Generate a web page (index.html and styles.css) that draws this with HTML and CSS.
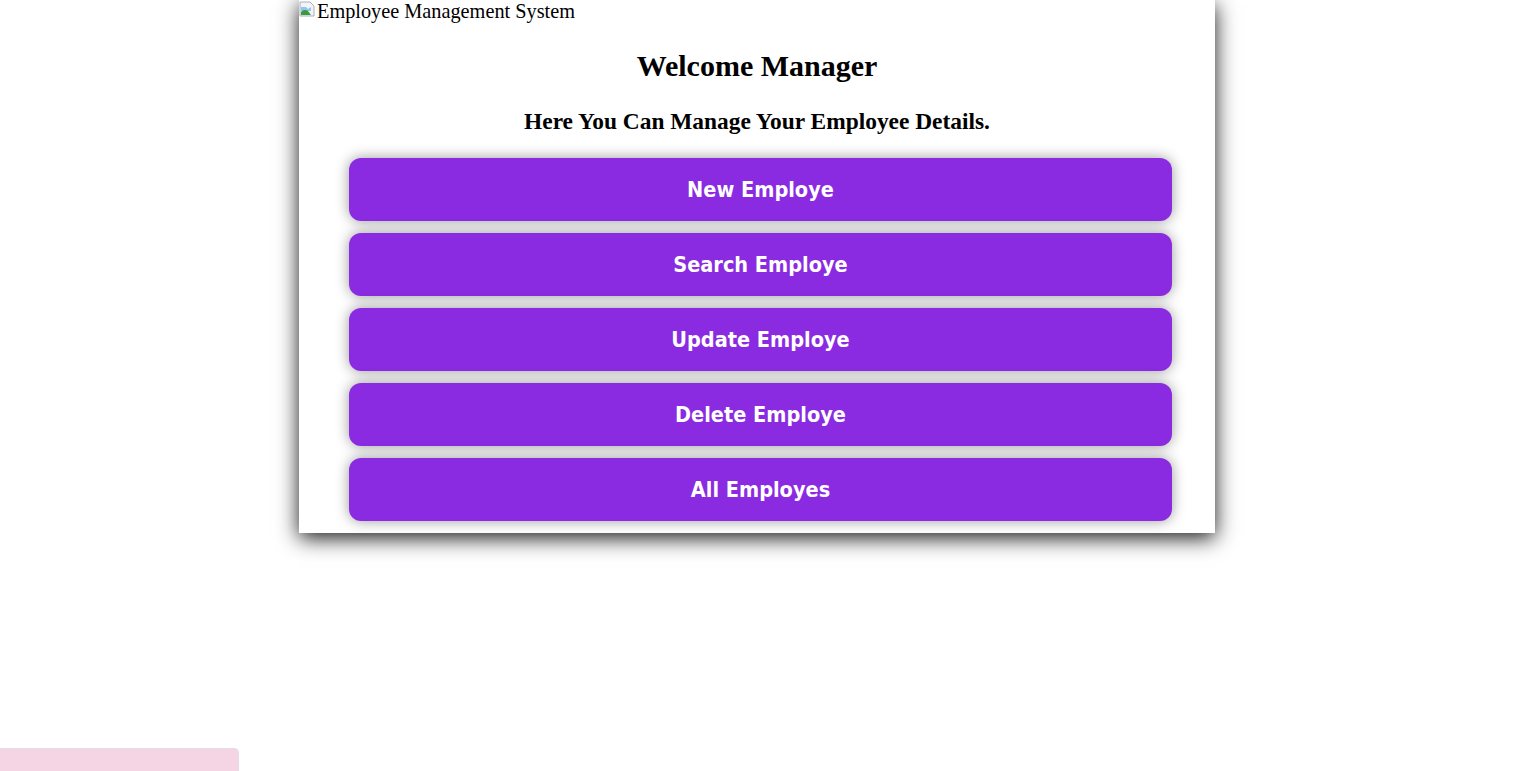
FILE: index.html
```html
<!DOCTYPE html>
<html>
<head>
<meta charset="utf-8">
<link rel="stylesheet" href="styles.css">
</head>
<body>
<div class="panel">
  <div class="logo"><svg class="broken" width="16" height="16" viewBox="0 0 16 16"><path d="M1 1h10l4 4v10H1z" fill="#f2f4f7" stroke="#a9b0ba"/><path d="M2 6h5l2 2 3-2v4H2z" fill="#8fc6ee"/><path d="M2 14v-3c3-3 5-2 7-1l3 4z" fill="#3c9a3c"/></svg><span class="alt">Employee Management System</span></div>
  <h2 class="title">Welcome Manager</h2>
  <h3 class="subtitle">Here You Can Manage Your Employee Details.</h3>
  <div class="menu">
    <button class="btn">New Employe</button>
    <button class="btn">Search Employe</button>
    <button class="btn">Update Employe</button>
    <button class="btn">Delete Employe</button>
    <button class="btn">All Employes</button>
  </div>
</div>
<div class="toast"></div>
</body>
</html>
```

FILE: styles.css
```css
html, body {
  margin: 0;
  padding: 0;
  background: #fff;
}
body {
  font-family: "Liberation Serif", "Times New Roman", serif;
  min-height: 100vh;
  display: flow-root;
}
.panel {
  width: 916px;
  margin: 0 0 0 299px;
  background: #fff;
  box-shadow: 0 5px 20px rgba(0, 0, 0, 0.9);
  padding-bottom: 12px;
}
.logo {
  display: flex;
  align-items: flex-start;
  height: 22px;
  line-height: 22px;
  color: #000;
}
.broken {
  margin-top: 1px;
  margin-right: 2px;
  flex: none;
}
.alt {
  font-size: 20.3px;
}
.title {
  margin: 24px 0 0;
  text-align: center;
  font-size: 30px;
  line-height: 40px;
  font-weight: bold;
}
.subtitle {
  margin: 20px 0 0;
  text-align: center;
  font-size: 23.4px;
  line-height: 30px;
  font-weight: bold;
}
.menu {
  display: flex;
  flex-direction: column;
  gap: 12px;
  margin: 22px 43px 0 50px;
}
.btn {
  height: 63px;
  border: none;
  border-radius: 12px;
  background: #8a2be2;
  color: #fff;
  font-family: "Liberation Sans Narrow", "DejaVu Sans Condensed", "Arial Narrow", sans-serif;
  font-weight: bold;
  font-size: 21.5px;
  box-shadow: 0 0 14px rgba(0, 0, 0, 0.4);
  padding: 0;
}
.toast {
  position: fixed;
  left: 0;
  top: 748px;
  width: 239px;
  height: 40px;
  background: #f5d5e3;
  border-top: 1px solid #e2dde0;
  border-right: 1px solid #e2dde0;
  border-radius: 0 5px 0 0;
  box-sizing: border-box;
}
```
